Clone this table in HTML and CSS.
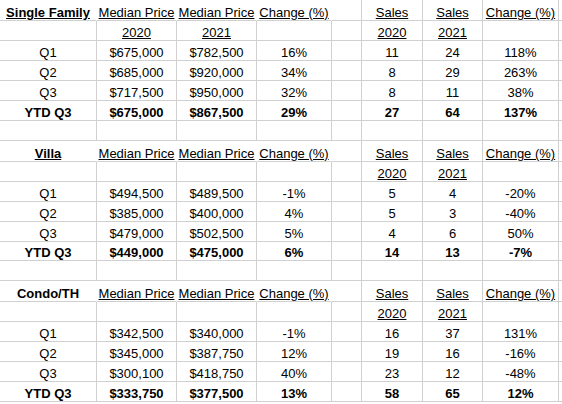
FILE: index.html
```html
<!DOCTYPE html>
<html lang="en">
<head>
    <meta charset="UTF-8">
    <meta name="viewport" content="width=device-width, initial-scale=1.0">
    <title>Median Price and Sales 2020 vs 2021</title>
    <link rel="stylesheet" href="styles.css">
</head>
<body>
    <table class="sheet">
        <colgroup>
            <col class="col-a">
            <col class="col-price">
            <col class="col-price">
            <col class="col-change">
            <col class="col-gap">
            <col class="col-sales1">
            <col class="col-sales2">
            <col class="col-change2">
            <col class="col-edge">
        </colgroup>
        <!-- Single Family -->
        <tr class="head first">
            <td class="hide title"><u>Single Family</u></td>
            <td class="hide"><u>Median Price</u></td>
            <td class="hide"><u>Median Price</u></td>
            <td class="hide"><u>Change (%)</u></td>
            <td></td>
            <td><u>Sales</u></td>
            <td><u>Sales</u></td>
            <td><u>Change (%)</u></td>
            <td class="edge"></td>
        </tr>
        <tr>
            <td></td><td><u>2020</u></td><td><u>2021</u></td><td></td><td></td>
            <td><u>2020</u></td><td><u>2021</u></td><td></td><td class="edge"></td>
        </tr>
        <tr>
            <td>Q1</td><td>$675,000</td><td>$782,500</td><td>16%</td><td></td>
            <td>11</td><td>24</td><td>118%</td><td class="edge"></td>
        </tr>
        <tr>
            <td>Q2</td><td>$685,000</td><td>$920,000</td><td>34%</td><td></td>
            <td>8</td><td>29</td><td>263%</td><td class="edge"></td>
        </tr>
        <tr>
            <td>Q3</td><td>$717,500</td><td>$950,000</td><td>32%</td><td></td>
            <td>8</td><td>11</td><td>38%</td><td class="edge"></td>
        </tr>
        <tr class="total">
            <td>YTD Q3</td><td>$675,000</td><td>$867,500</td><td>29%</td><td></td>
            <td>27</td><td>64</td><td>137%</td><td class="edge"></td>
        </tr>
        <tr>
            <td></td><td></td><td></td><td></td><td></td><td></td><td></td><td></td><td class="edge"></td>
        </tr>

        <!-- Villa -->
        <tr class="head">
            <td class="hide title"><u>Villa</u></td>
            <td class="hide"><u>Median Price</u></td>
            <td class="hide"><u>Median Price</u></td>
            <td class="hide"><u>Change (%)</u></td>
            <td></td>
            <td><u>Sales</u></td>
            <td><u>Sales</u></td>
            <td><u>Change (%)</u></td>
            <td class="edge"></td>
        </tr>
        <tr>
            <td></td><td></td><td></td><td></td><td></td>
            <td><u>2020</u></td><td><u>2021</u></td><td></td><td class="edge"></td>
        </tr>
        <tr>
            <td>Q1</td><td>$494,500</td><td>$489,500</td><td>-1%</td><td></td>
            <td>5</td><td>4</td><td>-20%</td><td class="edge"></td>
        </tr>
        <tr>
            <td>Q2</td><td>$385,000</td><td>$400,000</td><td>4%</td><td></td>
            <td>5</td><td>3</td><td>-40%</td><td class="edge"></td>
        </tr>
        <tr>
            <td>Q3</td><td>$479,000</td><td>$502,500</td><td>5%</td><td></td>
            <td>4</td><td>6</td><td>50%</td><td class="edge"></td>
        </tr>
        <tr class="total short">
            <td>YTD Q3</td><td>$449,000</td><td>$475,000</td><td>6%</td><td></td>
            <td>14</td><td>13</td><td>-7%</td><td class="edge"></td>
        </tr>
        <tr>
            <td></td><td></td><td></td><td></td><td></td><td></td><td></td><td></td><td class="edge"></td>
        </tr>

        <!-- Condo / Townhouse -->
        <tr class="head">
            <td class="hide title">Condo/TH</td>
            <td class="hide"><u>Median Price</u></td>
            <td class="hide"><u>Median Price</u></td>
            <td class="hide"><u>Change (%)</u></td>
            <td></td>
            <td><u>Sales</u></td>
            <td><u>Sales</u></td>
            <td><u>Change (%)</u></td>
            <td class="edge"></td>
        </tr>
        <tr>
            <td></td><td></td><td></td><td></td><td></td>
            <td><u>2020</u></td><td><u>2021</u></td><td></td><td class="edge"></td>
        </tr>
        <tr>
            <td>Q1</td><td>$342,500</td><td>$340,000</td><td>-1%</td><td></td>
            <td>16</td><td>37</td><td>131%</td><td class="edge"></td>
        </tr>
        <tr>
            <td>Q2</td><td>$345,000</td><td>$387,750</td><td>12%</td><td></td>
            <td>19</td><td>16</td><td>-16%</td><td class="edge"></td>
        </tr>
        <tr>
            <td>Q3</td><td>$300,100</td><td>$418,750</td><td>40%</td><td></td>
            <td>23</td><td>12</td><td>-48%</td><td class="edge"></td>
        </tr>
        <tr class="total">
            <td>YTD Q3</td><td>$333,750</td><td>$377,500</td><td>13%</td><td></td>
            <td>58</td><td>65</td><td>12%</td><td class="edge"></td>
        </tr>
    </table>
</body>
</html>
```

FILE: styles.css
```css
body {
    margin: 0;
    background-color: #ffffff;
    font-family: "Liberation Sans", Arial, sans-serif;
    font-size: 13px;
    color: #000000;
}

.sheet {
    border-collapse: separate;
    border-spacing: 0;
    table-layout: fixed;
    width: 562px;
}

.col-a { width: 97px; }
.col-price { width: 80px; }
.col-change { width: 75px; }
.col-gap { width: 30px; }
.col-sales1 { width: 61px; }
.col-sales2 { width: 60px; }
.col-change2 { width: 76px; }
.col-edge { width: 3px; }

.sheet tr {
    height: 20px;
}

.sheet tr.first {
    height: 22px;
}

.sheet tr.head {
    height: 21px;
}

.sheet tr.short {
    height: 19px;
}

.sheet td {
    padding: 0;
    border-right: 1px solid #d0d0d0;
    border-bottom: 1px solid #d0d0d0;
    text-align: center;
    vertical-align: bottom;
    line-height: 15px;
    white-space: nowrap;
    overflow: visible;
}

.sheet td.edge {
    border-right: none;
}

.sheet td.hide {
    border-right-color: #ffffff;
}

.title,
.total td {
    font-weight: bold;
}
```
